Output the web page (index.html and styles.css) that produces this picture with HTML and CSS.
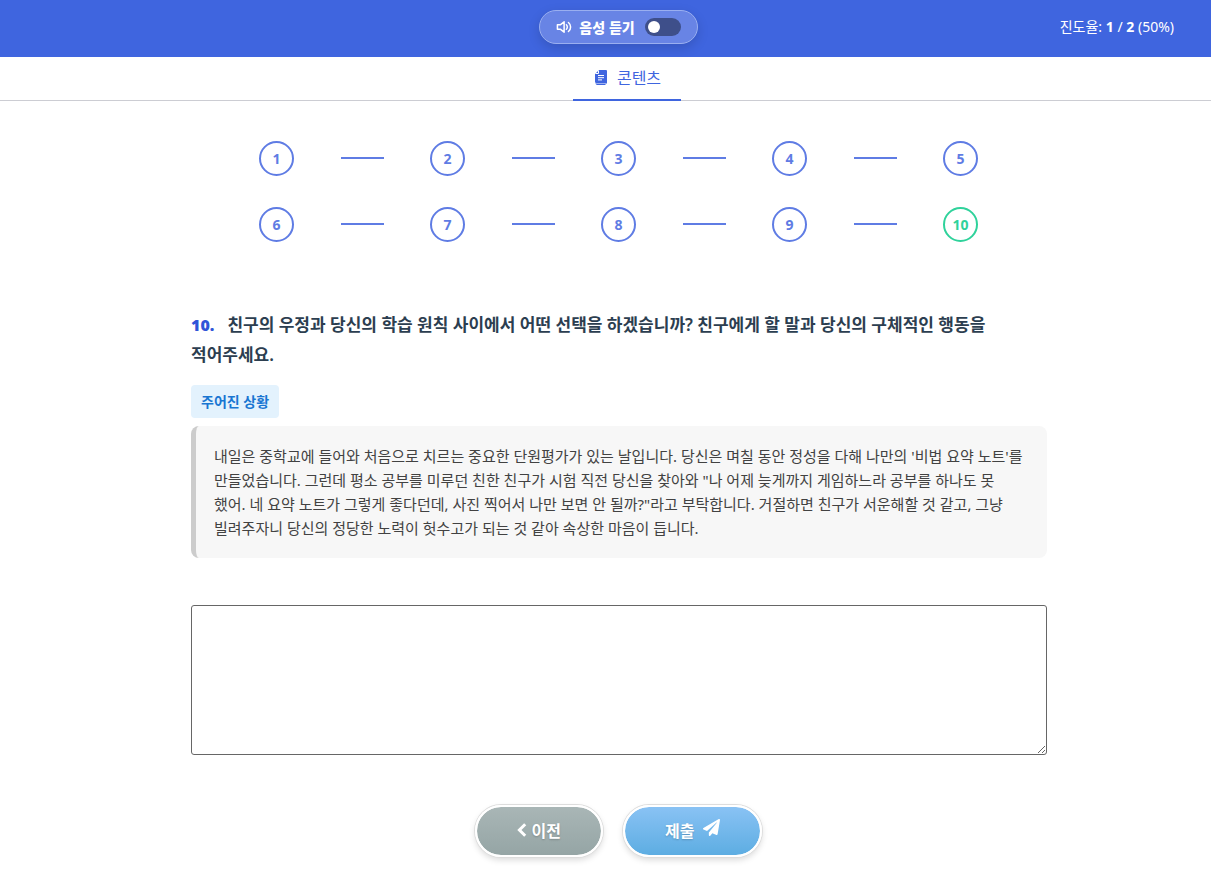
FILE: index.html
```html
<!DOCTYPE html>
<html lang="ko">
<head>
<meta charset="utf-8">
<meta name="viewport" content="width=device-width, initial-scale=1">
<title>콘텐츠</title>
<link rel="stylesheet" href="styles.css">
</head>
<body>
<header class="topbar">
  <label class="voice" for="voice-toggle">
    <svg class="voice-icon" viewBox="0 0 18 14" aria-hidden="true"><path d="M1.500 4.700h3L8.600 1.500v11L4.500 9.300h-3z"/><path d="M11 4.600c1.300 1.200 1.300 3.600 0 4.800M13.200 2.200c3 2.400 3 7.200 0 9.600"/></svg>
    <span>음성 듣기</span>
    <input class="switch" id="voice-toggle" type="checkbox" role="switch">
  </label>
  <div class="progress">진도율: <strong>1</strong> / <strong>2</strong> (50%)</div>
</header>
<nav class="tabs">
  <a class="tab" href="#content">
    <svg class="tab-icon" viewBox="0 0 16 16" aria-hidden="true"><path class="sheet" d="M6 1h7a1 1 0 0 1 1 1v12.500H4a2 2 0 0 1-2-2V5z"/><path class="back" d="M3 14.500a1 1 0 0 0 1 1h8.500"/><path class="rule" d="M5.500 1.500v3H2.500M5 6.500h6M5 8.700h6M5 10.900h4"/></svg>
    <span>콘텐츠</span>
  </a>
</nav>
<main class="content" id="content">
  <nav class="steps" aria-label="문항">
    <button class="step" type="button">1</button><span class="link"></span>
    <button class="step" type="button">2</button><span class="link"></span>
    <button class="step" type="button">3</button><span class="link"></span>
    <button class="step" type="button">4</button><span class="link"></span>
    <button class="step" type="button">5</button>
    <button class="step" type="button">6</button><span class="link"></span>
    <button class="step" type="button">7</button><span class="link"></span>
    <button class="step" type="button">8</button><span class="link"></span>
    <button class="step" type="button">9</button><span class="link"></span>
    <button class="step current" type="button" aria-current="step">10</button>
  </nav>
  <h1 class="question" id="question"><span class="number">10.</span>친구의 우정과 당신의 학습 원칙 사이에서 어떤 선택을 하겠습니까? 친구에게 할 말과 당신의 구체적인 행동을 적어주세요.</h1>
  <div class="badge">주어진 상황</div>
  <p class="situation">내일은 중학교에 들어와 처음으로 치르는 중요한 단원평가가 있는 날입니다. 당신은 며칠 동안 정성을 다해 나만의 '비법 요약 노트'를 만들었습니다. 그런데 평소 공부를 미루던 친한 친구가 시험 직전 당신을 찾아와 "나 어제 늦게까지 게임하느라 공부를 하나도 못 했어. 네 요약 노트가 그렇게 좋다던데, 사진 찍어서 나만 보면 안 될까?"라고 부탁합니다. 거절하면 친구가 서운해할 것 같고, 그냥 빌려주자니 당신의 정당한 노력이 헛수고가 되는 것 같아 속상한 마음이 듭니다.</p>
  <textarea class="answer" aria-labelledby="question"></textarea>
  <div class="actions">
    <button class="pill prev" type="button"><svg class="chevron" viewBox="0 0 10 16" aria-hidden="true"><path d="M8.200 2.200 2.400 8l5.800 5.800"/></svg>이전</button>
    <button class="pill submit" type="button">제출<svg class="plane" viewBox="0 0 512 512" aria-hidden="true"><path d="M476 3.200 12.500 270.600c-18.100 10.400-15.800 35.600 2.200 43.200L121 358.400l287.300-253.200c5.500-4.900 13.300 2.600 8.600 8.300L176 407v80.500c0 23.600 28.500 32.900 42.500 15.800L282 426l124.600 52.200c14.200 6 30.400-2.900 33-18.200l72-432C515 7.800 493.300-6.800 476 3.200z"/></svg></button>
  </div>
</main>
</body>
</html>
```

FILE: styles.css
```css
* {
  box-sizing: border-box;
}

body {
  margin: 0;
  background: #fff;
  color: #424242;
  font-family: "Noto Sans", "Noto Sans CJK KR", sans-serif;
  font-size: 14px;
  word-break: keep-all;
}

button {
  font-family: inherit;
  cursor: pointer;
}

.topbar {
  display: grid;
  grid-template-columns: 1fr auto 1fr;
  align-items: center;
  height: 57px;
  padding: 0 37px 3px 63px;
  background: #3f65df;
  color: #fff;
}

.voice {
  grid-column: 2;
  display: flex;
  align-items: center;
  gap: 6px;
  height: 34px;
  padding: 0 16px;
  border: 1px solid #9aaff0;
  border-radius: 17px;
  background: #6884e5;
  box-shadow: 0 4px 12px rgba(0, 0, 0, 0.15);
  font-family: "Noto Sans CJK KR", sans-serif;
  font-weight: 800;
  cursor: pointer;
}

.voice-icon {
  width: 17px;
  height: 14px;
  fill: none;
  stroke: #fff;
  stroke-width: 1.6;
  stroke-linecap: round;
  stroke-linejoin: round;
}

.switch {
  appearance: none;
  display: flex;
  align-items: center;
  width: 36px;
  height: 18px;
  margin: 0 0 0 4px;
  padding: 0 3px;
  border-radius: 9px;
  background: #3e4f8a;
}

.switch::before {
  content: "";
  width: 12px;
  height: 12px;
  border-radius: 50%;
  background: #fff;
}

.switch:checked {
  justify-content: flex-end;
}

.progress {
  justify-self: end;
  padding-bottom: 2px;
}

.tabs {
  display: flex;
  justify-content: center;
  height: 44px;
  padding-left: 43px;
  border-bottom: 1px solid #cccdd3;
}

.tab {
  display: flex;
  align-items: center;
  gap: 8px;
  height: 44px;
  padding: 0 20px 2px;
  border-bottom: 2px solid #3f65df;
  color: #3f65df;
  font-size: 16px;
  text-decoration: none;
}

.tab-icon {
  width: 16px;
  height: 16px;
}

.sheet {
  fill: #3f65df;
}

.back {
  fill: none;
  stroke: #3f65df;
}

.rule {
  fill: none;
  stroke: #fff;
}

.content {
  max-width: 856px;
  margin: 0 164px 0 191px;
  padding: 40px 0 18px;
}

.steps {
  display: grid;
  grid-template-columns: repeat(4, 35px 1fr) 35px;
  align-items: center;
  row-gap: 31px;
  margin: 0 69px 68px 68px;
}

.step {
  width: 35px;
  height: 35px;
  padding: 0;
  border: 2px solid #5f7ce4;
  border-radius: 50%;
  background: #fff;
  color: #5f7ce4;
  font-size: 14px;
  font-weight: 700;
}

.current {
  border-color: #2fd29b;
  color: #2fd29b;
}

.link {
  justify-self: center;
  width: 43px;
  height: 2px;
  margin-bottom: 1px;
  background: #5f7ce4;
}

.question {
  margin: 0 0 15px;
  color: #2c3e50;
  font-size: 17px;
  font-weight: 600;
  line-height: 30px;
}

.number {
  margin-right: 13px;
  color: #2f55d8;
  font-size: 16px;
  font-weight: 900;
}

.badge {
  width: fit-content;
  margin-bottom: 8px;
  padding: 0 10px;
  border-radius: 4px;
  background: #e3f2fd;
  color: #1976d2;
  font-size: 14px;
  font-weight: 600;
  line-height: 33px;
}

.situation {
  margin: 0 0 47px;
  padding: 18px;
  border-left: 5px solid #ccc;
  border-radius: 8px;
  background: #f7f7f7;
  font-size: 15px;
  line-height: 24px;
}

.answer {
  display: block;
  width: 100%;
  height: 150px;
  padding: 10px;
  border: 1px solid #666;
  border-radius: 3px;
  background: #fff;
  font: inherit;
  resize: vertical;
}

.actions {
  display: flex;
  justify-content: center;
  gap: 20px;
  margin: 50px 1px 0 0;
}

.pill {
  display: flex;
  align-items: center;
  justify-content: center;
  height: 52px;
  padding: 0 40px 2px;
  border: 2px solid #fff;
  border-radius: 26px;
  color: #fff;
  font-size: 16px;
  font-weight: 700;
  text-shadow: 0 1px 2px rgba(0, 0, 0, 0.2);
  box-shadow: 0 0 0 1px #ddd, 0 3px 6px rgba(0, 0, 0, 0.15);
}

.prev {
  gap: 5px;
  background: linear-gradient(#a9b6b6, #95a5a5) padding-box;
}

.submit {
  gap: 9px;
  background: linear-gradient(#89c2f4, #5dade2) padding-box;
}

.chevron {
  width: 10px;
  height: 16px;
  fill: none;
  stroke: #fff;
  stroke-width: 3;
}

.plane {
  width: 17px;
  height: 17px;
  margin-bottom: 6px;
  fill: #fff;
}
```
